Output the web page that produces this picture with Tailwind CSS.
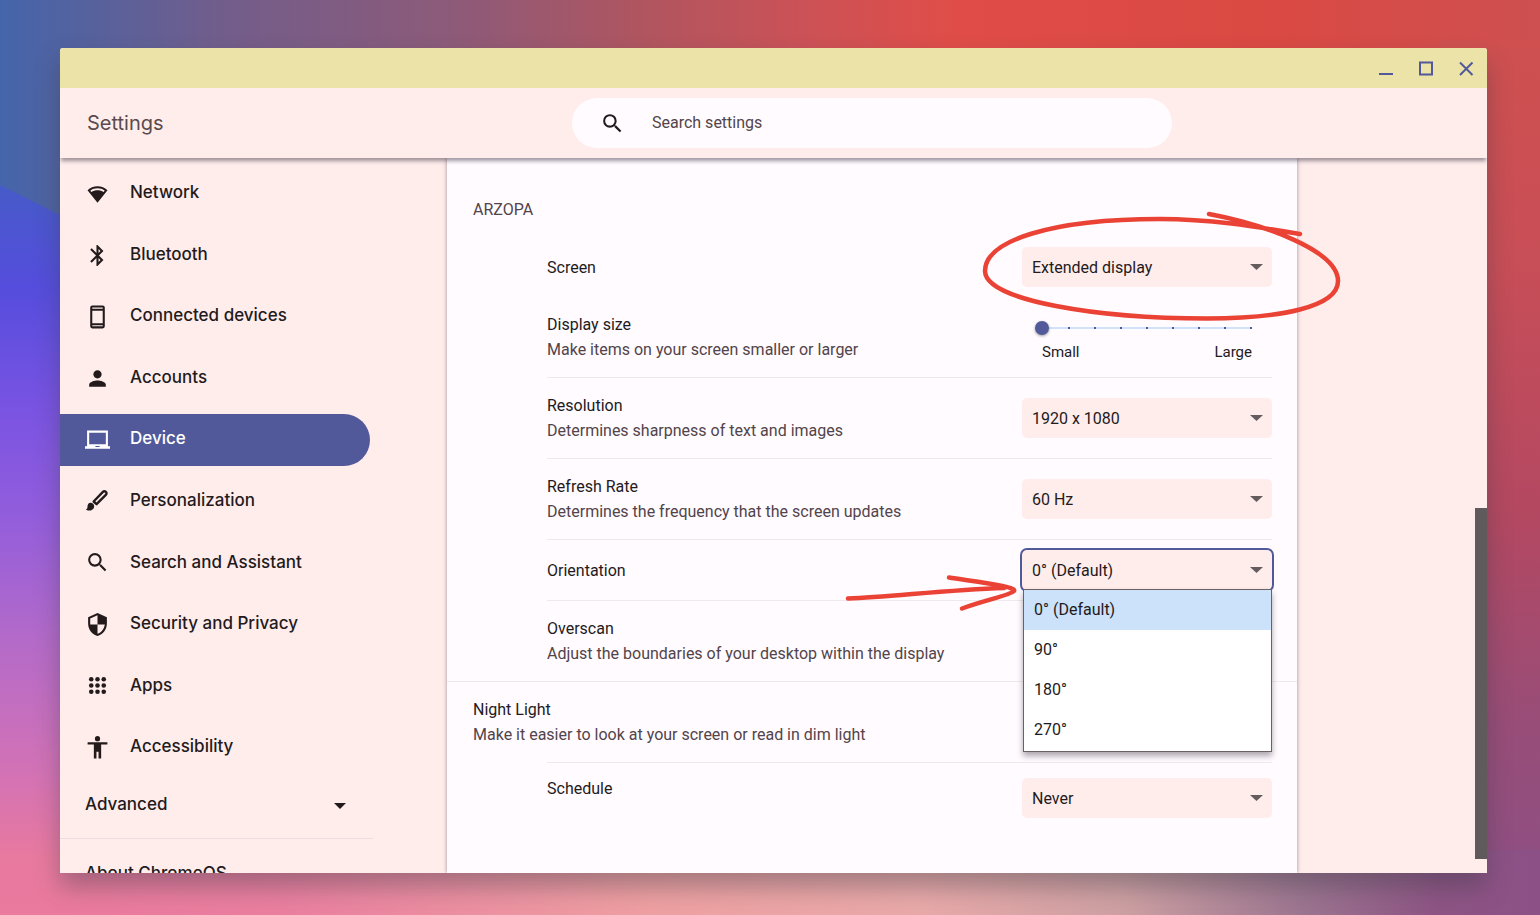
<!DOCTYPE html>
<html lang="en">
<head>
<meta charset="utf-8">
<title>Settings</title>
<script src="https://cdn.jsdelivr.net/npm/@tailwindcss/browser@4"></script>
</head>
<body class="relative h-screen overflow-hidden bg-[#b0508a] font-['Roboto',sans-serif] text-base text-[#231a1c]">

<!-- Wallpaper -->
<svg class="absolute inset-0 h-full w-full" viewBox="0 0 1540 915" preserveAspectRatio="none" aria-hidden="true">
  <defs>
    <linearGradient id="wt" x1="0" x2="1" y1="0" y2="0">
      <stop offset="0" stop-color="#4565ab"/><stop offset=".05" stop-color="#53629f"/><stop offset=".15" stop-color="#735d8a"/><stop offset=".3" stop-color="#8e5a78"/><stop offset=".42" stop-color="#b1555f"/><stop offset=".52" stop-color="#cb5257"/><stop offset=".62" stop-color="#e04d48"/><stop offset=".82" stop-color="#db4943"/><stop offset="1" stop-color="#ce5050"/>
    </linearGradient>
    <linearGradient id="wl" x1="0" x2="0" y1="0" y2="1">
      <stop offset="0" stop-color="#465bc8"/><stop offset=".14" stop-color="#554ddd"/><stop offset=".3" stop-color="#7853e2"/><stop offset=".45" stop-color="#925ddc"/><stop offset=".62" stop-color="#b36ac9"/><stop offset=".8" stop-color="#d272b6"/><stop offset=".92" stop-color="#e8799f"/><stop offset="1" stop-color="#ea7a9e"/>
    </linearGradient>
    <linearGradient id="wr" x1="0" x2="0" y1="0" y2="1">
      <stop offset="0" stop-color="#cf504f"/><stop offset=".25" stop-color="#c84e57"/><stop offset=".55" stop-color="#b34862"/><stop offset=".78" stop-color="#984d78"/><stop offset="1" stop-color="#8c5086"/>
    </linearGradient>
    <linearGradient id="wb" x1="0" x2="1" y1="0" y2="0">
      <stop offset="0" stop-color="#ea7a9e"/><stop offset=".15" stop-color="#ea7fa0"/><stop offset=".4" stop-color="#eea0a2"/><stop offset=".58" stop-color="#e9a9a9"/><stop offset=".72" stop-color="#cda0a3"/><stop offset=".84" stop-color="#9c7590"/><stop offset=".93" stop-color="#8d5484"/><stop offset="1" stop-color="#8c5086"/>
    </linearGradient>
  </defs>
  <rect width="1540" height="240" fill="url(#wt)"/>
  <rect x="1440" y="40" width="100" height="875" fill="url(#wr)"/>
  <polygon points="0,185 100,235 100,915 0,915" fill="url(#wl)"/>
  <rect x="60" y="850" width="1480" height="65" fill="url(#wb)"/>
</svg>

<div class="relative flex h-full pt-12 pr-[53px] pb-[42px] pl-[60px]">
  <div class="flex min-w-0 flex-1 flex-col overflow-hidden rounded-t-[3px] bg-[#ffedec] shadow-[0_14px_24px_rgba(60,60,70,0.4)]">

    <div class="flex h-10 shrink-0 items-center justify-end bg-[#ece3a9] pr-px text-[#51599a]">
      <button type="button" aria-label="Minimize" class="flex size-10 items-center justify-center"><svg class="size-5" viewBox="0 0 20 20" fill="none" stroke="currentColor" stroke-width="2"><path d="M3 16h14"/></svg></button>
      <button type="button" aria-label="Maximize" class="flex size-10 items-center justify-center"><svg class="size-5" viewBox="0 0 20 20" fill="none" stroke="currentColor" stroke-width="2"><path d="M4 4.500h12v12H4z"/></svg></button>
      <button type="button" aria-label="Close" class="flex size-10 items-center justify-center"><svg class="size-5" viewBox="0 0 20 20" fill="none" stroke="currentColor" stroke-width="2"><path d="M4 4.500l12.500 12.500M16.500 4.500L4 17"/></svg></button>
    </div>

    <header class="z-10 grid h-[70px] shrink-0 grid-cols-[387px_minmax(0,850px)_1fr] items-center bg-[#ffedec] shadow-[0_4px_4px_-1px_rgba(40,30,50,0.45)]">
      <h1 class="pl-[27px] font-['Inter',sans-serif] text-xl text-[#5a4a4e]">Settings</h1>
      <label class="mx-auto flex h-[50px] w-full max-w-[600px] items-center rounded-full bg-[#fffbff] pl-7">
        <svg class="size-[25px] shrink-0" viewBox="0 0 24 24" fill="currentColor" aria-hidden="true"><path d="M15.500 14h-.79l-.28-.27A6.470 6.470 0 0 0 16 9.500 6.500 6.500 0 1 0 9.500 16c1.610 0 3.090-.59 4.230-1.570l.27.28v.79l5 4.990L20.490 19l-4.990-5zm-6 0C7.010 14 5 11.990 5 9.500S7.010 5 9.500 5 14 7.010 14 9.500 11.990 14 9.500 14z"/></svg>
        <input type="text" aria-label="Search settings" placeholder="Search settings" class="ml-[27px] min-w-0 flex-1 bg-transparent outline-none placeholder:text-[#52444a]">
      </label>
    </header>

    <div class="grid min-h-0 flex-1 grid-cols-[387px_minmax(0,850px)_1fr] overflow-hidden">

      <nav class="flex flex-col overflow-hidden pt-2.5 pr-[74px] font-['Inter',sans-serif] text-[17px] font-medium">
        <div class="flex h-[606px] shrink-0 flex-col justify-between">
          <a href="#" class="flex h-[52px] items-center gap-5 pl-[25px]"><svg class="size-[25px]" viewBox="0 0 24 24" fill="currentColor"><path fill-rule="evenodd" d="M12 4C8.300 4 5 5.300 2.400 7.800L12 20l9.600-12.200C19 5.300 15.700 4 12 4zm0 2c2.600 0 5 .8 6.900 2.300l-1 1.300C16.200 8.600 14.200 8 12 8s-4.200.6-5.900 1.600l-1-1.300C7 6.800 9.400 6 12 6z"/></svg><span class="pb-0.5">Network</span></a>
          <a href="#" class="flex h-[52px] items-center gap-5 pl-[25px]"><svg class="size-[25px]" viewBox="0 0 24 24" fill="currentColor"><path d="M17.710 7.710L12 2h-1v7.590L6.410 5 5 6.410 10.590 12 5 17.590 6.410 19 11 14.410V22h1l5.710-5.710-4.300-4.290 4.300-4.290zM13 5.830l1.880 1.880L13 9.590V5.830zm1.880 10.460L13 18.170v-3.760l1.880 1.880z"/></svg><span class="pb-0.5">Bluetooth</span></a>
          <a href="#" class="flex h-[52px] items-center gap-5 pl-[25px]"><svg class="size-[25px]" viewBox="0 0 24 24" fill="currentColor"><path fill-rule="evenodd" d="M7 .5h10a2 2 0 0 1 2 2v18a2 2 0 0 1-2 2H7a2 2 0 0 1-2-2v-18a2 2 0 0 1 2-2zM7 5.500v12h10v-12zM7 2.500v1h10v-1zm0 17v1h10v-1z"/></svg><span class="pb-0.5">Connected devices</span></a>
          <a href="#" class="flex h-[52px] items-center gap-5 pl-[25px]"><svg class="size-[25px]" viewBox="0 0 24 24" fill="currentColor"><path d="M12 12c2.210 0 4-1.790 4-4s-1.790-4-4-4-4 1.790-4 4 1.790 4 4 4zm0 2c-2.670 0-8 1.340-8 4v2h16v-2c0-2.660-5.330-4-8-4z"/></svg><span class="pb-0.5">Accounts</span></a>
          <a href="#" aria-current="page" class="flex h-[52px] w-[310px] items-center gap-5 rounded-r-full bg-[#51599a] pl-[25px] text-white"><svg class="size-[25px]" viewBox="0 0 24 24" fill="currentColor"><path fill-rule="evenodd" d="M2 2.500h20v15h2v2.300H0v-2.300h2zM4 4.500v11h16v-11zM10 17.200v1h4v-1z"/></svg><span class="pb-0.5">Device</span></a>
          <a href="#" class="flex h-[52px] items-center gap-5 pl-[25px]"><svg class="size-[25px]" viewBox="0 0 24 24"><path d="M5.300 13.200c2 0 3.500 1.400 3.500 3.300 0 2.500-2 4.200-4.500 4.200-1.700 0-2.900-.6-3.500-1.500 1.200-.1 1.600-.9 1.600-2.500 0-2 1.200-3.500 2.900-3.500z" fill="currentColor"/><path d="M8.300 12l8.900-9.200c.8-.9 2-.9 2.800-.1.900.8.900 2 0 2.900l-8.900 9z" fill="none" stroke="currentColor" stroke-width="2.300" stroke-linejoin="round"/></svg><span class="pb-0.5">Personalization</span></a>
          <a href="#" class="flex h-[52px] items-center gap-5 pl-[25px]"><svg class="size-[25px]" viewBox="0 0 24 24" fill="currentColor"><path d="M15.500 13h-.79l-.28-.27A6.470 6.470 0 0 0 16 8.500 6.500 6.500 0 1 0 9.500 15c1.610 0 3.090-.59 4.230-1.570l.27.28v.79l5 4.990L20.490 18l-4.990-5zm-6 0C7.010 13 5 10.990 5 8.500S7.010 4 9.500 4 14 6.010 14 8.500 11.990 13 9.500 13z"/></svg><span class="pb-0.5">Search and Assistant</span></a>
          <a href="#" class="flex h-[52px] items-center gap-5 pl-[25px]"><svg class="size-[25px]" viewBox="0 0 24 24" fill="currentColor"><path fill-rule="evenodd" d="M12 1L3 5v6c0 5.550 3.840 10.740 9 12 5.160-1.260 9-6.450 9-12V5zM12 3.200V12h7c-.53 4.100-3.280 7.800-7 8.900V12H5V6.300z"/></svg><span class="pb-0.5">Security and Privacy</span></a>
          <a href="#" class="flex h-[52px] items-center gap-5 pl-[25px]"><svg class="size-[25px]" viewBox="0 0 24 24" fill="currentColor"><circle cx="6" cy="5" r="2.200"/><circle cx="12" cy="5" r="2.200"/><circle cx="18" cy="5" r="2.200"/><circle cx="6" cy="11" r="2.200"/><circle cx="12" cy="11" r="2.200"/><circle cx="18" cy="11" r="2.200"/><circle cx="6" cy="17" r="2.200"/><circle cx="12" cy="17" r="2.200"/><circle cx="18" cy="17" r="2.200"/></svg><span class="pb-0.5">Apps</span></a>
          <a href="#" class="flex h-[52px] items-center gap-5 pl-[25px]"><svg class="size-[25px]" viewBox="0 0 24 24" fill="currentColor"><circle cx="12" cy="3.500" r="2.500"/><path d="M21.500 9H15.500v13.500h-2.500V16h-2v6.500H8.500V9h-6V7h19z"/></svg><span class="pb-0.5">Accessibility</span></a>
        </div>
        <button type="button" class="flex h-[65px] shrink-0 items-center justify-between border-b border-[#ecdcdf] pr-[27px] pl-[25px] text-left"><span class="pb-0.5">Advanced</span><svg class="h-1.5 w-3" viewBox="0 0 12 6" fill="currentColor"><path d="M0 0h12L6 6z"/></svg></button>
        <a href="#" class="flex h-[70px] shrink-0 items-center pl-[25px]"><span>About ChromeOS</span></a>
      </nav>

      <main class="bg-[#fffbff] leading-[25px] shadow-[0_0_4px_rgba(60,40,60,0.5)]">
        <h2 class="h-[79px] px-[26px] pt-[39px] text-[#52444a]">ARZOPA</h2>

        <div class="flex h-[60px] items-center justify-between pr-[25px] pl-[100px]">
          <label for="screen">Screen</label>
          <div class="relative w-[250px]">
            <select id="screen" class="h-10 w-full appearance-none rounded-[5px] bg-[#ffedec] pl-2.5"><option>Extended display</option></select>
            <svg class="pointer-events-none absolute top-[17px] right-[9px] h-1.5 w-[13px] text-[#655c5e]" viewBox="0 0 13 6" fill="currentColor"><path d="M0 0h13L6.500 6z"/></svg>
          </div>
        </div>

        <div class="pr-[25px] pl-[100px]">
          <div class="flex h-[81px] items-center justify-between border-b border-[#efe8ec]">
            <div><label for="size">Display size</label><p class="text-[#52444a]">Make items on your screen smaller or larger</p></div>
            <div class="mr-[13px] w-[224px] pt-2 text-[15px] leading-5">
              <div class="relative h-4">
                <div class="absolute inset-x-1.5 top-[7px] h-0.5 px-px"><div class="flex h-full justify-between bg-[#cfe2f7]"><i class="w-0.5 bg-[#51599a]"></i><i class="w-0.5 bg-[#51599a]"></i><i class="w-0.5 bg-[#51599a]"></i><i class="w-0.5 bg-[#51599a]"></i><i class="w-0.5 bg-[#51599a]"></i><i class="w-0.5 bg-[#51599a]"></i><i class="w-0.5 bg-[#51599a]"></i><i class="w-0.5 bg-[#51599a]"></i><i class="w-0.5 bg-[#51599a]"></i></div></div>
                <input id="size" type="range" min="0" max="8" value="0" class="relative block h-4 w-full appearance-none bg-transparent [&::-webkit-slider-thumb]:size-3.5 [&::-webkit-slider-thumb]:appearance-none [&::-webkit-slider-thumb]:rounded-full [&::-webkit-slider-thumb]:bg-[#51599a] [&::-webkit-slider-thumb]:shadow-[0_1px_3px_rgba(0,0,0,0.4)]">
              </div>
              <div class="flex justify-between px-[7px] pt-1.5"><span>Small</span><span>Large</span></div>
            </div>
          </div>

          <div class="flex h-[81px] items-center justify-between border-b border-[#efe8ec]">
            <div><label for="res">Resolution</label><p class="text-[#52444a]">Determines sharpness of text and images</p></div>
            <div class="relative w-[250px]">
              <select id="res" class="h-10 w-full appearance-none rounded-[5px] bg-[#ffedec] pl-2.5"><option>1920 x 1080</option></select>
              <svg class="pointer-events-none absolute top-[17px] right-[9px] h-1.5 w-[13px] text-[#655c5e]" viewBox="0 0 13 6" fill="currentColor"><path d="M0 0h13L6.500 6z"/></svg>
            </div>
          </div>

          <div class="flex h-[81px] items-center justify-between border-b border-[#efe8ec]">
            <div><label for="rate">Refresh Rate</label><p class="text-[#52444a]">Determines the frequency that the screen updates</p></div>
            <div class="relative w-[250px]">
              <select id="rate" class="h-10 w-full appearance-none rounded-[5px] bg-[#ffedec] pl-2.5"><option>60 Hz</option></select>
              <svg class="pointer-events-none absolute top-[17px] right-[9px] h-1.5 w-[13px] text-[#655c5e]" viewBox="0 0 13 6" fill="currentColor"><path d="M0 0h13L6.500 6z"/></svg>
            </div>
          </div>

          <div class="flex h-[61px] items-center justify-between border-b border-[#efe8ec]">
            <label for="orient">Orientation</label>
            <div class="relative w-[250px]">
              <select id="orient" class="h-10 w-full appearance-none rounded-[5px] bg-[#ffedec] pl-2.5 ring-2 ring-[#51599a]"><option>0° (Default)</option><option>90°</option><option>180°</option><option>270°</option></select>
              <svg class="pointer-events-none absolute top-[17px] right-[9px] h-1.5 w-[13px] text-[#655c5e]" viewBox="0 0 13 6" fill="currentColor"><path d="M0 0h13L6.500 6z"/></svg>
              <ul role="listbox" aria-label="Orientation" class="absolute top-[39px] right-0 left-px z-10 border border-[#6b6063] bg-white pb-px leading-10 shadow-[0_4px_6px_rgba(50,40,50,0.4)]">
                <li role="option" aria-selected="true" class="bg-[#cbe2fa] pl-2.5">0° (Default)</li>
                <li role="option" aria-selected="false" class="pl-2.5">90°</li>
                <li role="option" aria-selected="false" class="pl-2.5">180°</li>
                <li role="option" aria-selected="false" class="pl-2.5">270°</li>
              </ul>
            </div>
          </div>

          <div class="flex h-20 items-center">
            <div><h3>Overscan</h3><p class="text-[#52444a]">Adjust the boundaries of your desktop within the display</p></div>
          </div>
        </div>

        <div class="flex h-[81px] items-center border-t border-[#efe8ec] px-[26px]">
          <div><h3>Night Light</h3><p class="text-[#52444a]">Make it easier to look at your screen or read in dim light</p></div>
        </div>

        <div class="pr-[25px] pl-[100px]">
          <div class="flex items-start justify-between border-t border-[#efe8ec] pt-[15px]">
            <label for="sched" class="-mt-0.5">Schedule</label>
            <div class="relative w-[250px]">
              <select id="sched" class="h-10 w-full appearance-none rounded-[5px] bg-[#ffedec] pl-2.5"><option>Never</option></select>
              <svg class="pointer-events-none absolute top-[17px] right-[9px] h-1.5 w-[13px] text-[#655c5e]" viewBox="0 0 13 6" fill="currentColor"><path d="M0 0h13L6.500 6z"/></svg>
            </div>
          </div>
        </div>
      </main>

      <div class="flex justify-end pt-[350px]"><div class="h-[351px] w-3 bg-[#605a5c]"></div></div>
    </div>
  </div>
</div>

<!-- Hand-drawn marks -->
<svg class="pointer-events-none absolute top-0 left-0 z-20" width="1540" height="915" viewBox="0 0 1540 915" fill="none" stroke="#ea4335" stroke-width="4.500" stroke-linecap="round" stroke-linejoin="round" aria-hidden="true">
  <path d="M1209 214C1262 224 1338 250 1338 281C1338 307 1280 318.500 1207 318.500C1100 318.500 985 301 985 271C985 241 1050 219 1160 219C1212 219 1258 227 1300 234"/>
  <path d="M848 598.500C890 597 945 590 1004 588M949 577.500C970 581 1017 586 1014 591C1011 595 985 600 962 608.500"/>
</svg>
</body>
</html>
